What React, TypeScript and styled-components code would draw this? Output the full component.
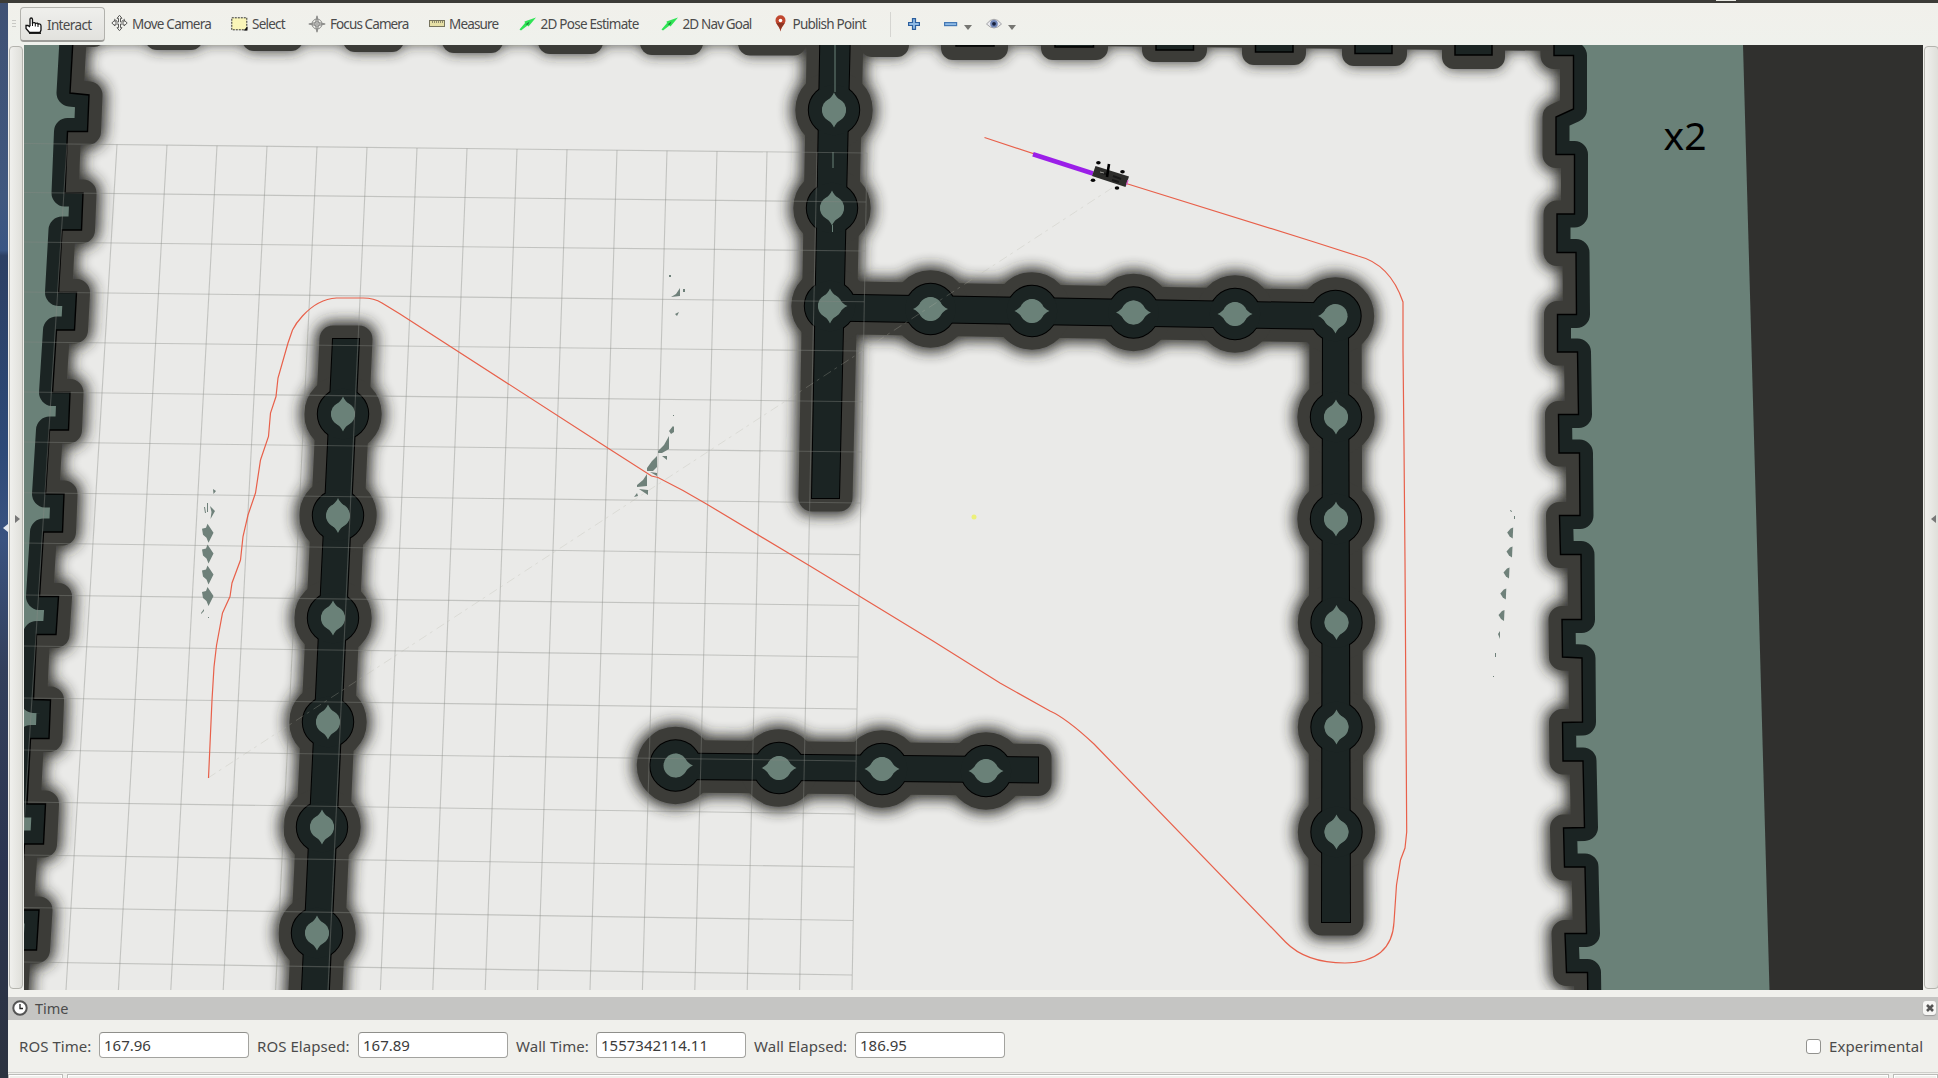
import React from "react";
import styled, { createGlobalStyle } from "styled-components";

const Global = createGlobalStyle`
  * { box-sizing: border-box; }
  body { margin: 0; overflow: hidden; background: #f0f0ec; }
`;

const font = `"Noto Sans", "Open Sans", sans-serif`;

const Screen = styled.div`
  width: 1938px;
  height: 1078px;
  display: flex;
  flex-direction: column;
  overflow: hidden;
  background: #f0f0ec;
  color: #4b4b4b;
  font-family: ${font};
`;
const TopStrip = styled.div`
  height: 3px;
  flex: none;
  background: #3c3b37;
`;
const TopNotch = styled.div`
  width: 20px;
  height: 1px;
  margin-left: 1716px;
  background: #e8e8e2;
`;
const Body = styled.div`
  flex: 1;
  display: flex;
  min-height: 0;
`;
const Desktop = styled.div`
  width: 8px;
  flex: none;
  display: flex;
  align-items: center;
  justify-content: flex-end;
  padding-bottom: 25px;
  background: linear-gradient(#3f5174 0, #40587f 18%, #3a5684 23%, #2c4064 23.5%, #2d4a78 42%, #3a5380 50%, #33405c 62%, #2c3550 80%, #2c3340 100%);
`;
const Win = styled.div`
  flex: 1;
  min-width: 0;
  display: flex;
  flex-direction: column;
`;
const Toolbar = styled.div`
  height: 42px;
  flex: none;
  display: flex;
  align-items: center;
  padding-left: 4px;
  background: linear-gradient(#f1f0eb, #eff1ec);
`;
const Grip = styled.div`
  width: 4px;
  height: 8px;
  margin-right: 4px;
  background: repeating-linear-gradient(#c9c9c5 0 1px, transparent 1px 3px);
`;
const Tool = styled.div<{ $w: number; $gap?: number; $ls?: number }>`
  width: ${(p) => p.$w}px;
  height: 36px;
  padding: 0 0 1px 6px;
  flex: none;
  display: flex;
  align-items: center;
  gap: ${(p) => p.$gap ?? 4}px;
  white-space: nowrap;
  font-size: 13.5px;
  letter-spacing: ${(p) => p.$ls ?? -0.75}px;
  svg { flex: none; }
`;
const ActiveTool = styled(Tool)`
  height: 35px;
  padding: 3px 0 0 4px;
  border: 1px solid #b2b2ad;
  border-bottom: 2px solid #9c9c98;
  border-radius: 4px;
  background: linear-gradient(#efefec, #e2e2de);
`;
const Separator = styled.div`
  width: 1px;
  height: 25px;
  background: #d5d5d1;
  margin-right: 17px;
`;
const SmallTool = styled.div<{ $ml: number }>`
  display: flex;
  margin-left: ${(p) => p.$ml}px;
`;
const Caret = styled.div`
  margin: 7px 0 0 6px;
  border: 4px solid transparent;
  border-top: 5px solid #767672;
  border-bottom: 0;
`;
const Middle = styled.div`
  display: flex;
  height: 945px;
  flex: none;
`;
const Splitter = styled.div<{ $right?: boolean }>`
  flex: none;
  width: ${(p) => (p.$right ? 15 : 14)}px;
  margin: 1px ${(p) => (p.$right ? 0 : 1)}px 0 1px;
  height: 943px;
  display: flex;
  align-items: center;
  justify-content: flex-end;
  padding: 2px 2px 0;
  border: 1px solid #b4b4ae;
  border-radius: 4px;
  background: linear-gradient(90deg, #f0f0ed, #dfdfda);
`;
const Arrow = styled.div<{ $dir: "left" | "right"; $c: string }>`
  border: 4px solid transparent;
  border-${(p) => (p.$dir === "left" ? "right" : "left")}: 5px solid ${(p) => p.$c};
  border-${(p) => p.$dir}: 0;
`;
const Scene = styled.svg`
  display: block;
  flex: none;
`;
const PanelTitle = styled.div`
  height: 23px;
  margin-top: 7px;
  flex: none;
  display: flex;
  align-items: center;
  justify-content: space-between;
  padding: 0 2px 2px 4px;
  background: #c5c5c3;
  font-size: 14.5px;
`;
const TitleText = styled.span`
  display: flex;
  align-items: center;
  gap: 7px;
`;
const Close = styled.div`
  width: 13px;
  height: 14px;
  border-radius: 3px;
  background: #f6f6f4;
  display: flex;
  align-items: center;
  justify-content: center;
  box-shadow: 0 1px 1px #999;
`;
const Fields = styled.div`
  height: 52px;
  flex: none;
  display: flex;
  align-items: center;
  padding: 0 16px 0 11px;
  font-size: 15px;
`;
const FieldLabel = styled.label<{ $w: number; $ls?: number }>`
  width: ${(p) => p.$w}px;
  white-space: nowrap;
  letter-spacing: ${(p) => p.$ls ?? 0.05}px;
`;
const Field = styled.div`
  width: 150px;
  height: 26px;
  margin: 0 8px 2px 0;
  padding-left: 4px;
  border: 1px solid #a3a39f;
  border-top-color: #8f8f8b;
  border-radius: 4px;
  background: #fff;
  color: #3c3c3c;
  line-height: 24px;
`;
const Check = styled.div`
  width: 15px;
  height: 15px;
  margin: 0 8px 0 auto;
  border: 1px solid #92928e;
  border-radius: 3px;
  background: #fff;
`;
const Frames = styled.div`
  flex: 1;
  display: flex;
  gap: 4px;
  border-top: 1px solid #cfcfcb;
  padding-top: 1px;
`;
const Frame = styled.div<{ $w?: number }>`
  ${(p) => (p.$w ? `width: ${p.$w}px; flex: none;` : "flex: 1;")}
  height: 12px;
  border: 1px solid #bcbcb8;
  box-shadow: inset 0 0 0 1px #fff;
`;

const leftEdge =
  "72.7,30 72.7,45 70,93 89,95 87.5,131.5 67.5,131.5 65,193 83,193 81.5,230 62,230 58.5,292.5 76.5,292.5 74.5,330 56.5,330 52.5,392.5 70,392.5 68.5,430 49.5,430 45.5,494 64,494 62.5,532 43.5,532 39.5,596.5 58.5,596.5 56,634.5 36.5,634.5 33.5,699.5 50.5,700 49,738.5 30.5,738.5 27,804 45.5,804 43.5,844 24.5,844 20,910 39,910 36.5,950 17,950 14,1010";
const rightEdge =
  "1554,30 1554,55.5 1573.5,55.5 1573.5,109 1556,117 1556,154.5 1574.5,154.5 1574.5,214 1557,214 1557,252.5 1576,252.5 1576.5,314.5 1557.5,314.5 1557.5,352 1577.5,352 1578.5,414.5 1558.5,414.5 1559,453 1579.5,453 1580,515.5 1559.5,515.5 1560.5,554.5 1581,554.5 1581.5,619.5 1562,619.5 1562.5,657 1582,658 1582.5,722 1562.5,722.5 1563,761 1583,761 1584.5,827.5 1563.5,828 1564.5,867 1585,867 1586.5,933.5 1565,933.5 1566.5,972.5 1587.5,972.5 1588,1010";

const teeth: [number, number, number][] = [
  [60, 106, 47], [145, 203, 50], [242, 303, 51], [343, 404, 52], [442, 503, 53],
  [538, 603, 54], [640, 703, 55], [738, 806, 55.5], [860, 909, 57], [941, 1008, 60], [1041, 1108, 60],
  [1142, 1207, 62], [1242, 1306, 65], [1342, 1407, 66], [1442, 1505, 69],
];
const darkTeeth: [number, number, number][] = [
  [956, 994, 46], [1055, 1093.5, 47], [1156, 1193.5, 50], [1255.5, 1293, 52], [1355, 1392, 53.5], [1455, 1492, 55],
];

const bars = [
  "333,339 359,339 328,1010 301,1010",
  "820.5,30 850,30 839,498 812,498",
  "829,294.5 1335,303.5 1335,329 829,320.5",
  "1323,316 1348,316 1350,922 1322,922",
  "675,753.5 1038,757.5 1038,782.5 675,779",
];
type Tips = string;
const nodes: [number, number, Tips][] = [
  [343, 414, "ud"], [338, 515.5, "ud"], [333, 618, "ud"], [328, 722, "ud"], [322, 827, "ud"], [317, 933, "ud"],
  [834, 110, "ud"], [832, 208, "ud"], [830, 306, "udr"],
  [930.5, 309, "lr"], [1032, 311, "lr"], [1133.5, 312.5, "lr"], [1235, 314, "lr"], [1335.5, 316, "ld"],
  [1336, 417, "ud"], [1336, 519, "ud"], [1336.5, 622.5, "ud"], [1336.5, 727, "ud"], [1336.5, 832, "ud"],
  [675.5, 765.5, "r"], [779, 768, "lr"], [882, 769, "lr"], [986, 771, "lr"],
];
const angle: Record<string, number> = { u: 0, r: 90, d: 180, l: 270 };

const rowL = [143.5, 192.5, 242, 292, 342, 392, 442, 492.7, 543, 595, 646, 698, 750, 802, 855, 907.5, 962];
const rowR = [153, 202, 251, 301.7, 351, 401.7, 452, 503, 554.6, 605.5, 657, 709, 761, 814, 867, 920.5, 975];

const route =
  "M208.5 778L212 700L214 667L216.5 645.5L222.5 613L230 596.5L232 583L240.5 560L243 536.5L248 515L255.5 493L260.5 460L268.5 436.5L270.5 413L276 396.5L278 378L288 343L292.5 330Q296 323 302.5 316Q318 299 336.5 298L363 298Q374 298 382 303L400 314L600 443L651.5 476L658 477.5L683 490.5L706.5 504L810 566L933 641L1000 683L1050 711Q1066 718 1094 744L1285.5 942Q1306 963 1345 963Q1392 962 1394 922L1396.5 885L1400.5 860L1405 848L1406.7 832L1405 561L1404 446L1403 350L1403 302Q1390 264 1358 256L1311 241L1127 183.7L1092 173L984.5 137.5";

const Walls = () => (
  <>
    {bars.map((b) => <polygon key={b} points={b} />)}
    {nodes.map(([x, y]) => <circle key={x + "-" + y} cx={x} cy={y} r={25.2} />)}
  </>
);
const Edges = () => (
  <g fill="none">
    <polyline points={leftEdge} />
    <polyline points={rightEdge} />
  </g>
);
const Teeth = () => (
  <g strokeWidth="0">
    <polygon points="70,20 1560,20 1560,51 1000,45 70,42" />
    {teeth.map(([a, b, y]) => <rect key={a} x={a} y={10} width={b - a} height={y - 10} rx={12} />)}
  </g>
);

const MapView = () => (
  <Scene width="1899" height="945" viewBox="24 45 1899 945">
    <defs>
      <filter id="soft" filterUnits="userSpaceOnUse" x="-40" y="-20" width="2020" height="1080">
        <feGaussianBlur stdDeviation="7" />
      </filter>
      <clipPath id="outside">
        <polygon points={`0,30 ${leftEdge} 0,1010`} />
        <polygon points={`1930,30 ${rightEdge} 1930,1010`} />
      </clipPath>
    </defs>
    <rect x="24" y="45" width="1899" height="945" fill="#eaeae8" />
    <g filter="url(#soft)" fill="#262723" stroke="#262723" strokeWidth="36" strokeLinejoin="round" opacity="0.92">
      <Walls /><Edges /><Teeth />
    </g>
    <g fill="#3c3c38" stroke="#3c3c38" strokeWidth="27" strokeLinejoin="round">
      <Walls /><Edges /><Teeth />
    </g>
    <g fill="#000" stroke="#000" strokeWidth="2"><Walls /></g>
    <g fill="#1b2423" stroke="#1b2423" strokeWidth="0"><Walls /></g>
    {darkTeeth.map(([a, b, y]) => (
      <rect key={a} x={a} y={30} width={b - a} height={y - 30} fill="#1b2423" stroke="#000" strokeWidth="1.5" />
    ))}
    <g clipPath="url(#outside)">
      <rect x="0" y="30" width="1930" height="980" fill="#6a8178" />
      <g stroke="#1b2423" strokeWidth="27" strokeLinejoin="round"><Edges /></g>
      <polygon points="1743,45 1930,45 1930,990 1769.5,990" fill="#30302e" />
    </g>
    <g stroke="#000" strokeWidth="1.4"><Edges /></g>
    <g fill="#6a8178">
      {nodes.map(([x, y, tips]) => (
        <g key={x + "," + y} transform={`translate(${x} ${y})`}>
          <circle r="12" />
          {tips.split("").map((t) => (
            <path key={t} transform={`rotate(${angle[t]})`} d="M-12 0C-11 -9 -3 -10 0 -17.5C3 -10 11 -9 12 0Z" />
          ))}
        </g>
      ))}
      <path d="M835 45V92M833 152V168M832.5 225V232" stroke="#6a8178" strokeWidth="1" />
    </g>
    <g stroke="#868985" strokeOpacity="0.4" strokeWidth="1.1">
      {rowL.map((y, i) => <line key={y} x1="24" y1={y} x2={867 - (15 * i) / 16} y2={rowR[i]} />)}
      {Array.from({ length: 17 }, (_, i) => (
        <line key={i} x1={67 + 50 * i} y1={144 + i * 0.56} x2={13.6 + 52.4 * i} y2="990" />
      ))}
    </g>
    <path d="M208 778L1112 188" stroke="#b4b4a8" strokeWidth="0.7" strokeDasharray="9 4 3 5" opacity="0.4" />
    <g fill="#6f817a">
      {[532.7, 553.5, 574.5, 596].map((y) => (
        <path key={y} d={`M202 ${y - 4}L206 ${y - 5}L207.500 ${y - 9}L213.500 ${y}L208.500 ${y + 10}L206.500 ${y + 5}L203 ${y + 2}Z`} />
      ))}
      <path d="M213 489l3 2l-2.500 3zM210 506l5 5l-4.500 8l1 -7zM207 503l1 0v9h-1zM204 507h1l1 6h-1zM201 613l3 -4v2l-3 3zM208 617h1v1h-1z" />
      {[[1510.7, 532.5], [1510, 551.5], [1507, 572.5], [1503.8, 593.5], [1502, 615]].map(([x, y]) => (
        <path key={y} d={`M${x - 3.5} ${y}L${x} ${y - 4}L${x + 2.5} ${y - 5}L${x + 2} ${y + 6}L${x - 1} ${y + 4}Z`} />
      ))}
      <path d="M1498 634l2 -3v8zM1495 653h1v4h-1zM1493 676h1v1h-1zM1514 516h1v3h-1zM1510 510h1l1 2h-1z" />
      <path d="M671 297l5 -3l4 -6v8zM669 275h2v2h-2zM683 289h2v3h-2zM675 314l4 -2l-2 4z" />
      <path d="M669 431l4 -5l1 1v5l-3 2zM658 453v-2l6 -6l5 -9v13l-7 4zM662 456h5v4zM647 471v-3l5 -7l5 -5v11l-4 4zM650 472l7 1v3zM637 487v-2l6 -5l4 -6v12zM639 489l9 1v5zM634 497l3 -4l1 3zM673 415h1v1h-1z" />
    </g>
    <path d={route} fill="none" stroke="#e8604a" strokeWidth="1.2" />
    <circle cx="974" cy="517" r="2.500" fill="#ecf07a" />
    <line x1="1033" y1="154.300" x2="1093" y2="173.500" stroke="#9b1fe8" strokeWidth="4.600" />
    <g fill="#050505">
      <ellipse cx="1098.400" cy="162.800" rx="2.300" ry="1.800" /><ellipse cx="1122.500" cy="171.800" rx="2.300" ry="1.800" />
      <ellipse cx="1093" cy="180.300" rx="2.300" ry="1.800" /><ellipse cx="1117" cy="188" rx="2.300" ry="1.800" />
    </g>
    <path d="M1095.500 166L1129 176.500L1125.500 187L1092 176Z" fill="#2d2d2b" />
    <path d="M1102 173l4 1M1113 176l8 3M1112 180l7 2" stroke="#191919" strokeWidth="2" />
    <path d="M1100 172l4 1" stroke="#9a9a94" strokeWidth="1" />
    <path d="M1109 164L1107 177" stroke="#000" strokeWidth="2.600" />
    <path d="M1128 180l-1.500 5" stroke="#d65cc8" strokeWidth="1.200" />
    <text x="1663.500" y="149.500" fontSize="39" fontFamily={font} fill="#000">x2</text>
  </Scene>
);

const Hand = () => (
  <svg width="18" height="17" viewBox="0 0 18 17">
    <path d="M5 9V2.500Q5 1 6.200 1T7.500 2.500V6Q10 5 10.500 6.500Q12.800 5.500 13.200 7Q16 6.500 16 9V13L15 15.500H4.500L1 11.500V8.500H3L5 10" fill="#fff" stroke="#111" strokeWidth="1.300" />
    <path d="M7.500 6v3M10.300 6.500v3M13 7v3" stroke="#111" />
    <path d="M4 16.300h12" stroke="#111" strokeWidth="1.200" />
  </svg>
);
const Move = () => (
  <svg width="17" height="17" viewBox="0 0 17 17">
    <path d="M8.500 .8L11 3.800H9.500V7.500H13V5.500L16.200 8.500L13 11.500V9.500H9.500V13.200H11L8.500 16.200L6 13.200H7.500V9.500H4V11.500L.8 8.500L4 5.500V7.500H7.500V3.800H6Z" transform="translate(0 -.500)" fill="#f4f4f1" stroke="#5a5a58" />
    <path d="M3 4l3 2M14 4l-3 2" stroke="#777" />
  </svg>
);
const SelectIcon = () => (
  <svg width="17" height="14" viewBox="0 0 17 14">
    <rect x=".8" y=".8" width="15" height="12" fill="#faf6b8" stroke="#333" strokeDasharray="2 1" />
    <path d="M16.500 9.500V13.500H12.500Z" fill="#111" />
  </svg>
);
const Focus = () => (
  <svg width="18" height="18" viewBox="0 0 18 18" fill="none" stroke="#8b8b89">
    <path d="M9 .8L10.500 7.500L17.200 9L10.500 10.500L9 17.200L7.500 10.500L.8 9L7.500 7.500Z" fill="#f4f4f1" />
    <circle cx="9" cy="9" r="5" /><circle cx="9" cy="9" r="2.300" />
    <path d="M9 2v14M2 9h14" strokeWidth=".800" />
  </svg>
);
const Ruler = () => (
  <svg width="16" height="7" viewBox="0 0 16 7">
    <rect x=".5" y=".5" width="15" height="6" fill="#e6dfa6" stroke="#77745e" />
    <path d="M3.500 1v2M5.500 1v2M7.500 1v2M9.500 1v2M11.500 1v2M13.500 1v2" stroke="#77745e" strokeWidth=".800" />
  </svg>
);
const Green = () => (
  <svg width="18" height="14" viewBox="0 0 18 14">
    <path d="M.5 12.500L6 6L5.500 4.500L17 .5L9.500 9.500L8.500 8.500L2 13.500Z" fill="#2fe455" />
    <path d="M6.500 7.500L10.500 4.500L9 7.800Z" fill="#1a7a35" />
  </svg>
);
const Pin = () => (
  <svg width="11" height="17" viewBox="0 0 11 17">
    <path d="M5.500 16.500C4.800 11.500 .5 9.500 .5 5.300A5 5 0 0 1 10.500 5.300C10.500 9.500 6.200 11.500 5.500 16.500Z" fill="#c0472f" />
    <path d="M5.500 16.500C5.200 12 2 10 1.500 8H9.500C9 10 5.800 12 5.500 16.500Z" fill="#8d3523" />
    <circle cx="5.500" cy="5.500" r="1.800" fill="#fff" />
  </svg>
);
const Plus = () => (
  <svg width="12" height="12" viewBox="0 0 12 12">
    <path d="M4.500 .6H7.500V4.500H11.400V7.500H7.500V11.400H4.500V7.500H.6V4.500H4.500Z" fill="#8fbbe6" stroke="#2c5f9e" strokeWidth="1.200" />
  </svg>
);
const Minus = () => (
  <svg width="14" height="12" viewBox="0 0 14 12">
    <rect x=".6" y="4.600" width="12" height="3" fill="#8fbbe6" stroke="#4478b4" strokeWidth="1.200" />
  </svg>
);
const Eye = () => (
  <svg width="16" height="12" viewBox="0 0 16 12">
    <path d="M.5 6Q8 -3.500 15.500 6Q8 14 .5 6Z" fill="#e9e9ee" stroke="#a3a3a6" />
    <circle cx="8" cy="5.800" r="3.800" fill="#7086b8" /><circle cx="8" cy="5.800" r="1.900" fill="#17203c" />
  </svg>
);
const Clock = () => (
  <svg width="16" height="16" viewBox="0 0 16 16">
    <circle cx="8" cy="8" r="6.700" fill="#fff" stroke="#555" strokeWidth="2" />
    <path d="M8 4V8.500H11" fill="none" stroke="#222" strokeWidth="1.300" />
  </svg>
);

export default function App() {
  return (
    <Screen>
      <Global />
      <TopStrip><TopNotch /></TopStrip>
      <Body>
        <Desktop><Arrow $dir="left" $c="#e4e8ee" /></Desktop>
        <Win>
          <Toolbar>
            <Grip />
            <ActiveTool $w={85} $ls={-0.65}><Hand />Interact</ActiveTool>
            <Tool $w={120}><Move />Move Camera</Tool>
            <Tool $w={77}><SelectIcon />Select</Tool>
            <Tool $w={121} $ls={-0.9}><Focus />Focus Camera</Tool>
            <Tool $w={89.5} $ls={-0.85}><Ruler />Measure</Tool>
            <Tool $w={142}><Green />2D Pose Estimate</Tool>
            <Tool $w={114} $ls={-0.85}><Green />2D Nav Goal</Tool>
            <Tool $w={121} $gap={7}><Pin />Publish Point</Tool>
            <Separator />
            <SmallTool $ml={0}><Plus /></SmallTool>
            <SmallTool $ml={24}><Minus /><Caret /></SmallTool>
            <SmallTool $ml={14}><Eye /><Caret /></SmallTool>
          </Toolbar>
          <Middle>
            <Splitter><Arrow $dir="right" $c="#777" /></Splitter>
            <MapView />
            <Splitter $right><Arrow $dir="left" $c="#777" /></Splitter>
          </Middle>
          <PanelTitle>
            <TitleText><Clock />Time</TitleText>
            <Close>
              <svg width="8" height="8" viewBox="0 0 8 8"><path d="M1 1L7 7M7 1L1 7" stroke="#555" strokeWidth="2.600" /></svg>
            </Close>
          </PanelTitle>
          <Fields>
            <FieldLabel $w={80}>ROS Time:</FieldLabel><Field>167.96</Field>
            <FieldLabel $w={101}>ROS Elapsed:</FieldLabel><Field>167.89</Field>
            <FieldLabel $w={80}>Wall Time:</FieldLabel><Field>1557342114.11</Field>
            <FieldLabel $w={101}>Wall Elapsed:</FieldLabel><Field>186.95</Field>
            <Check /><FieldLabel $w={93}>Experimental</FieldLabel>
          </Fields>
          <Frames><Frame $w={55} /><Frame /><Frame $w={45} /></Frames>
        </Win>
      </Body>
    </Screen>
  );
}
